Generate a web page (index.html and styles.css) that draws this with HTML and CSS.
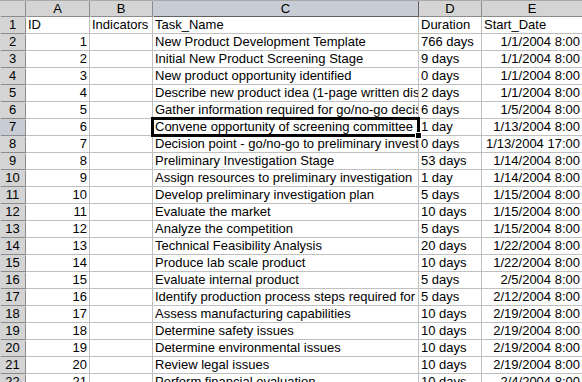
FILE: index.html
```html
<!DOCTYPE html>
<html>
<head>
<meta charset="utf-8">
<link rel="stylesheet" href="styles.css">
</head>
<body>
<div class="sheet">
  <div class="hd corner"></div>
  <div class="hd col">A</div>
  <div class="hd col">B</div>
  <div class="hd col sel">C</div>
  <div class="hd col">D</div>
  <div class="hd col">E</div>

  <div class="hd row">1</div><div class="c">ID</div><div class="c">Indicators</div><div class="c">Task_Name</div><div class="c">Duration</div><div class="c">Start_Date</div>
  <div class="hd row">2</div><div class="c n">1</div><div class="c"></div><div class="c">New Product Development Template</div><div class="c">766 days</div><div class="c n">1/1/2004 8:00</div>
  <div class="hd row">3</div><div class="c n">2</div><div class="c"></div><div class="c">Initial New Product Screening Stage</div><div class="c">9 days</div><div class="c n">1/1/2004 8:00</div>
  <div class="hd row">4</div><div class="c n">3</div><div class="c"></div><div class="c">New product opportunity identified</div><div class="c">0 days</div><div class="c n">1/1/2004 8:00</div>
  <div class="hd row">5</div><div class="c n">4</div><div class="c"></div><div class="c">Describe new product idea (1-page written dis</div><div class="c">2 days</div><div class="c n">1/1/2004 8:00</div>
  <div class="hd row">6</div><div class="c n">5</div><div class="c"></div><div class="c">Gather information required for go/no-go decision</div><div class="c">6 days</div><div class="c n">1/5/2004 8:00</div>
  <div class="hd row sel">7</div><div class="c n">6</div><div class="c"></div><div class="c active">Convene opportunity of screening committee</div><div class="c">1 day</div><div class="c n">1/13/2004 8:00</div>
  <div class="hd row">8</div><div class="c n">7</div><div class="c"></div><div class="c">Decision point - go/no-go to preliminary investigation</div><div class="c">0 days</div><div class="c n">1/13/2004 17:00</div>
  <div class="hd row">9</div><div class="c n">8</div><div class="c"></div><div class="c">Preliminary Investigation Stage</div><div class="c">53 days</div><div class="c n">1/14/2004 8:00</div>
  <div class="hd row">10</div><div class="c n">9</div><div class="c"></div><div class="c">Assign resources to preliminary investigation</div><div class="c">1 day</div><div class="c n">1/14/2004 8:00</div>
  <div class="hd row">11</div><div class="c n">10</div><div class="c"></div><div class="c">Develop preliminary investigation plan</div><div class="c">5 days</div><div class="c n">1/15/2004 8:00</div>
  <div class="hd row">12</div><div class="c n">11</div><div class="c"></div><div class="c">Evaluate the market</div><div class="c">10 days</div><div class="c n">1/15/2004 8:00</div>
  <div class="hd row">13</div><div class="c n">12</div><div class="c"></div><div class="c">Analyze the competition</div><div class="c">5 days</div><div class="c n">1/15/2004 8:00</div>
  <div class="hd row">14</div><div class="c n">13</div><div class="c"></div><div class="c">Technical Feasibility Analysis</div><div class="c">20 days</div><div class="c n">1/22/2004 8:00</div>
  <div class="hd row">15</div><div class="c n">14</div><div class="c"></div><div class="c">Produce lab scale product</div><div class="c">10 days</div><div class="c n">1/22/2004 8:00</div>
  <div class="hd row">16</div><div class="c n">15</div><div class="c"></div><div class="c">Evaluate internal product</div><div class="c">5 days</div><div class="c n">2/5/2004 8:00</div>
  <div class="hd row">17</div><div class="c n">16</div><div class="c"></div><div class="c">Identify production process steps required for</div><div class="c">5 days</div><div class="c n">2/12/2004 8:00</div>
  <div class="hd row">18</div><div class="c n">17</div><div class="c"></div><div class="c">Assess manufacturing capabilities</div><div class="c">10 days</div><div class="c n">2/19/2004 8:00</div>
  <div class="hd row">19</div><div class="c n">18</div><div class="c"></div><div class="c">Determine safety issues</div><div class="c">10 days</div><div class="c n">2/19/2004 8:00</div>
  <div class="hd row">20</div><div class="c n">19</div><div class="c"></div><div class="c">Determine environmental issues</div><div class="c">10 days</div><div class="c n">2/19/2004 8:00</div>
  <div class="hd row">21</div><div class="c n">20</div><div class="c"></div><div class="c">Review legal issues</div><div class="c">10 days</div><div class="c n">2/19/2004 8:00</div>
  <div class="hd row">22</div><div class="c n">21</div><div class="c"></div><div class="c">Perform financial evaluation</div><div class="c">10 days</div><div class="c n">2/4/2004 8:00</div>
</div>
</body>
</html>
```

FILE: styles.css
```css
html, body {
  margin: 0;
  padding: 0;
  background: #ffffff;
  overflow: hidden;
}

.sheet {
  display: grid;
  grid-template-columns: 25px 63px 62px 265px 62px 1fr;
  grid-auto-rows: 16px;
  gap: 1px;
  background: #c0c0c0;
  width: 582px;
  height: 382px;
  overflow: hidden;
  font-family: "Liberation Sans", Arial, sans-serif;
  font-size: 13px;
  line-height: 16px;
  color: #000000;
}

.hd {
  background: #d4d4d4;
  text-align: center;
  box-shadow: 1px 1px 0 #8c8c8c;
}

.col {
  border-top: 1px solid #a8a8a8;
  height: 15px;
}

.corner {
  border-top: 1px solid #a8a8a8;
  height: 15px;
}

.hd.sel {
  background: #c8ccd4;
}

.col.sel {
  box-shadow: 1px 1px 0 #606060;
}

.c {
  background: #ffffff;
  padding: 0 1px 0 2px;
  white-space: nowrap;
  overflow: hidden;
}

.c.n {
  text-align: right;
  padding: 0 2px 0 1px;
}

.c.active {
  position: relative;
  overflow: visible;
}

.c.active::before {
  content: "";
  position: absolute;
  left: -2px;
  top: -2px;
  right: -2px;
  bottom: -2px;
  border: 3px solid #000000;
  pointer-events: none;
}

.c.active::after {
  content: "";
  position: absolute;
  right: -4px;
  bottom: -4px;
  width: 5px;
  height: 5px;
  background: #000000;
  border: 1px solid #ffffff;
}
```
